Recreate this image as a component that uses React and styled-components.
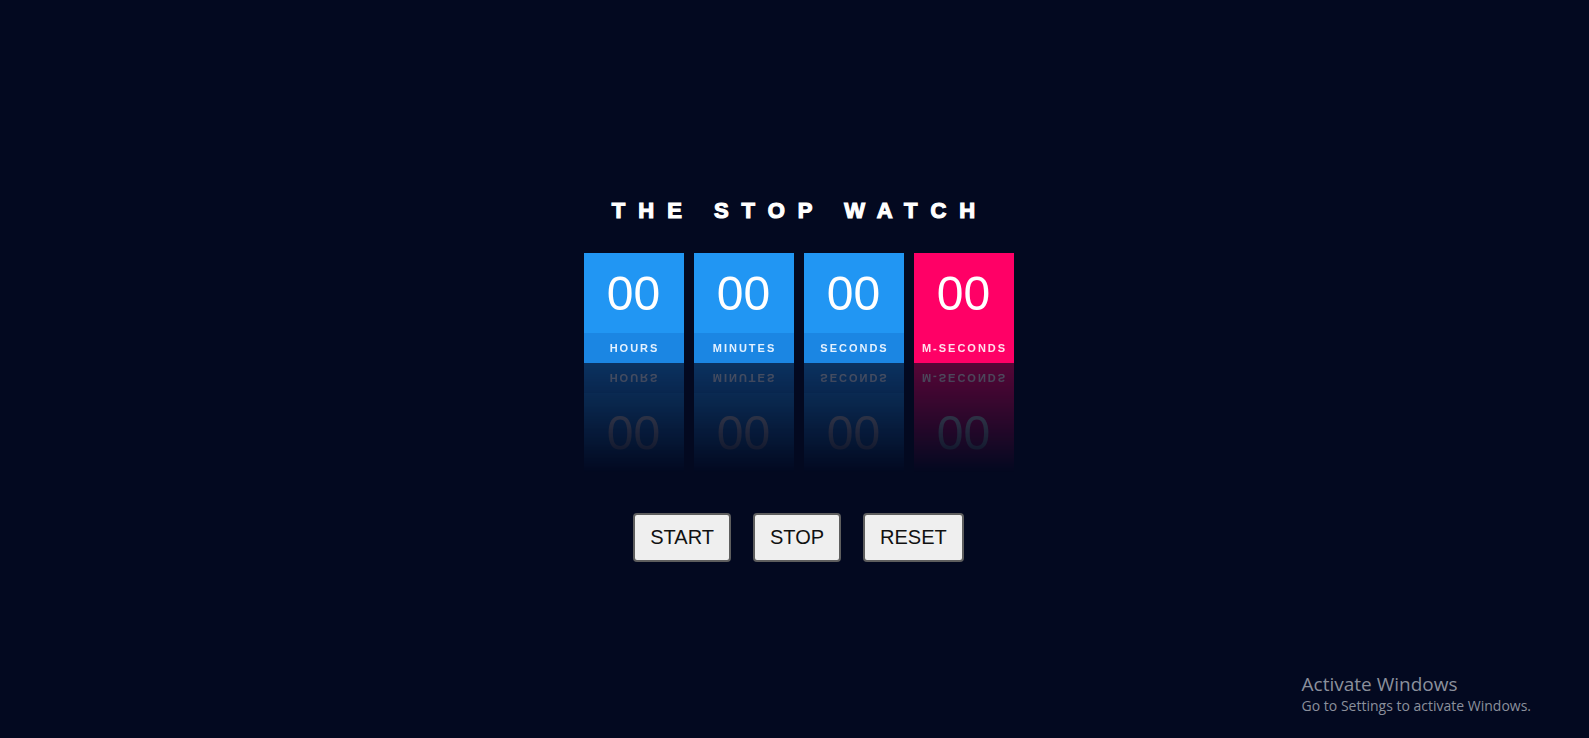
import styled, { createGlobalStyle } from "styled-components";

const GlobalStyle = createGlobalStyle`
  html, body {
    margin: 0;
    padding: 0;
    background: #030920;
  }
  * {
    box-sizing: border-box;
  }
`;

const units = [
  { label: "Hours", value: "00", tone: "blue" },
  { label: "Minutes", value: "00", tone: "blue" },
  { label: "Seconds", value: "00", tone: "blue" },
  { label: "M-Seconds", value: "00", tone: "pink" },
];

const tones = {
  blue: { top: "#2196f3", bottom: "#1b86e3", text: "#e3f1ff" },
  pink: { top: "#ff0066", bottom: "#ff0066", text: "#ffe0ec" },
};

export default function App() {
  return (
    <>
      <GlobalStyle />
      <Page>
        <Title>The Stop Watch</Title>
        <Timer>
          {units.map((u) => (
            <Unit key={u.label} $tone={u.tone}>
              <Digits>{u.value}</Digits>
              <Label $tone={u.tone}>{u.label}</Label>
            </Unit>
          ))}
        </Timer>
        <Controls>
          <Button>START</Button>
          <Button>STOP</Button>
          <Button>RESET</Button>
        </Controls>
      </Page>
      <Watermark>
        <strong>Activate Windows</strong>
        <span>Go to Settings to activate Windows.</span>
      </Watermark>
    </>
  );
}

const Page = styled.main`
  min-height: 100vh;
  padding: 198px 0 0 8px;
  display: flex;
  flex-direction: column;
  align-items: center;
  font-family: "Liberation Sans", Arial, sans-serif;
`;

const Title = styled.h1`
  margin: 0 0 30px;
  padding-left: 3px;
  font-size: 22px;
  line-height: 25px;
  font-weight: 700;
  letter-spacing: 13px;
  text-transform: uppercase;
  color: #ffffff;
  -webkit-text-stroke: 1.2px #ffffff;
`;

const Timer = styled.div`
  display: flex;
  gap: 10px;
`;

const Unit = styled.div`
  width: 100px;
  height: 110px;
  display: flex;
  flex-direction: column;
  background: ${({ $tone }) => tones[$tone].top};
  -webkit-box-reflect: below 0 linear-gradient(transparent, rgba(255, 255, 255, 0.33));
`;

const Digits = styled.div`
  height: 80px;
  display: flex;
  justify-content: center;
  align-items: center;
  font-size: 48px;
  color: #ffffff;
`;

const Label = styled.div`
  height: 30px;
  display: flex;
  justify-content: center;
  align-items: center;
  padding-left: 2px;
  background: ${({ $tone }) => tones[$tone].bottom};
  color: ${({ $tone }) => tones[$tone].text};
  font-size: 11px;
  font-weight: 700;
  letter-spacing: 2px;
  text-transform: uppercase;
`;

const Controls = styled.div`
  margin-top: 150px;
  display: flex;
  gap: 22px;
`;

const Button = styled.button`
  padding: 10px 15px;
  border: 2px solid #5e5e5e;
  border-radius: 4px;
  background: #efefef;
  color: #111111;
  font-family: "Liberation Sans", Arial, sans-serif;
  font-size: 20px;
  line-height: 25px;
  cursor: pointer;
`;

const Watermark = styled.div`
  position: absolute;
  right: 58px;
  bottom: 22px;
  display: flex;
  flex-direction: column;
  font-family: "Open Sans", sans-serif;
  color: #8b909c;

  strong {
    font-weight: 400;
    font-size: 19px;
    line-height: 24px;
  }

  span {
    font-size: 14px;
    line-height: 20px;
  }
`;
